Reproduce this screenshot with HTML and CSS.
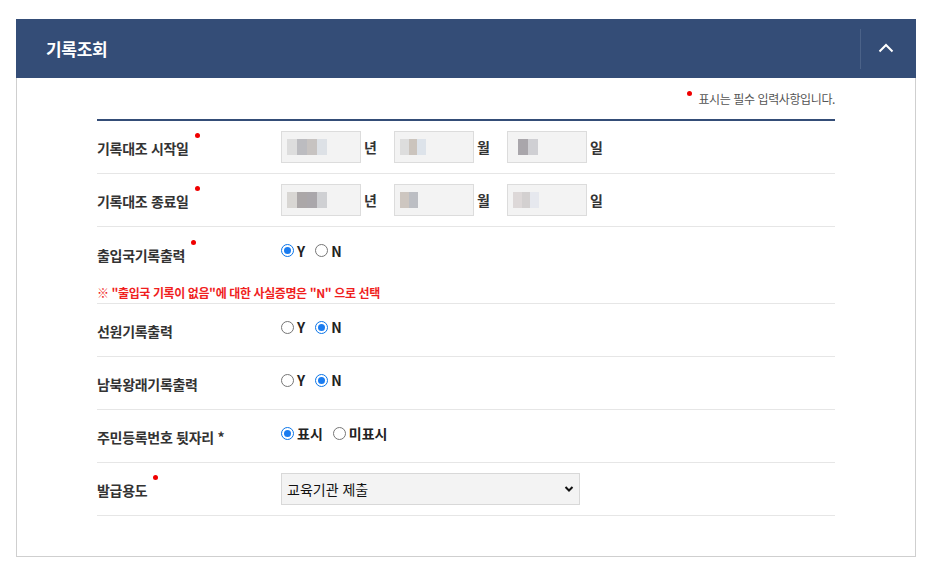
FILE: index.html
```html
<!DOCTYPE html>
<html lang="ko">
<head>
<meta charset="utf-8">
<title>기록조회</title>
<link rel="stylesheet" href="styles.css">
</head>
<body>
<section class="panel">
  <header class="panel-head">
    <h2 class="panel-title">기록조회</h2>
    <button class="toggle" type="button" aria-label="접기">
      <svg width="16" height="10" viewBox="0 0 16 10"><path d="M1.5 8.5 L8 2 L14.5 8.5" fill="none" stroke="#fff" stroke-width="2"/></svg>
    </button>
  </header>
  <div class="panel-body">
    <p class="req-note"><span class="dot"></span>표시는 필수 입력사항입니다.</p>
    <div class="form">
      <div class="row">
        <div class="label">기록대조 시작일<span class="dot"></span></div>
        <div class="field">
          <span class="inp"><span class="mosaic m1"></span></span><span class="unit">년</span>
          <span class="inp"><span class="mosaic m2"></span></span><span class="unit">월</span>
          <span class="inp"><span class="mosaic m3"></span></span><span class="unit">일</span>
        </div>
      </div>
      <div class="row">
        <div class="label">기록대조 종료일<span class="dot"></span></div>
        <div class="field">
          <span class="inp"><span class="mosaic m4"></span></span><span class="unit">년</span>
          <span class="inp"><span class="mosaic m5"></span></span><span class="unit">월</span>
          <span class="inp"><span class="mosaic m6"></span></span><span class="unit">일</span>
        </div>
      </div>
      <div class="row row-tall">
        <div class="row-main">
          <div class="label">출입국기록출력<span class="dot"></span></div>
          <div class="field radios">
            <label class="radio"><span class="rb on"></span>Y</label>
            <label class="radio"><span class="rb"></span>N</label>
          </div>
        </div>
        <p class="warn">※ "출입국 기록이 없음"에 대한 사실증명은 "N" 으로 선택</p>
      </div>
      <div class="row">
        <div class="label">선원기록출력</div>
        <div class="field radios">
          <label class="radio"><span class="rb"></span>Y</label>
          <label class="radio"><span class="rb on"></span>N</label>
        </div>
      </div>
      <div class="row">
        <div class="label">남북왕래기록출력</div>
        <div class="field radios">
          <label class="radio"><span class="rb"></span>Y</label>
          <label class="radio"><span class="rb on"></span>N</label>
        </div>
      </div>
      <div class="row">
        <div class="label">주민등록번호 뒷자리 *</div>
        <div class="field radios">
          <label class="radio"><span class="rb on"></span>표시</label>
          <label class="radio"><span class="rb"></span>미표시</label>
        </div>
      </div>
      <div class="row">
        <div class="label">발급용도<span class="dot"></span></div>
        <div class="field">
          <div class="select">
            <span>교육기관 제출</span>
            <svg width="10" height="8" viewBox="0 0 10 8"><path d="M1.5 2 L5 5.5 L8.5 2" fill="none" stroke="#111" stroke-width="2"/></svg>
          </div>
        </div>
      </div>
    </div>
  </div>
</section>
</body>
</html>
```
FILE: styles.css
```css
* { box-sizing: border-box; }
body {
  margin: 0;
  padding: 19px 17px 0 16px;
  background: #fff;
  font-family: "Noto Sans CJK KR", "Noto Sans", sans-serif;
  color: #222;
}
.panel { width: 900px; }
.panel-head {
  height: 59px;
  background: #344d77;
  display: flex;
  align-items: center;
  justify-content: space-between;
  padding-left: 30px;
}
.panel-title {
  margin: 0;
  color: #fff;
  font-size: 17px;
  font-weight: 700;
  letter-spacing: -0.3px;
}
.toggle {
  width: 56px;
  height: 40px;
  border: 0;
  border-left: 1px solid #4b6288;
  background: transparent;
  display: flex;
  align-items: center;
  justify-content: center;
  padding: 0 6px 2px 0;
}
.panel-body {
  border: 1px solid #cfcfcf;
  border-top: 0;
  padding: 0 80px 40px 80px;
}
.req-note {
  margin: 0;
  height: 43px;
  display: flex;
  justify-content: flex-end;
  align-items: center;
  padding-top: 0;
  font-size: 12px;
  color: #555;
  letter-spacing: -0.4px;
  border-bottom: 2px solid #344d77;
}
.dot {
  display: inline-block;
  width: 5px;
  height: 5px;
  border-radius: 50%;
  background: #f00000;
  vertical-align: top;
}
.req-note .dot { margin: -10px 6px 0 0; align-self: center; }
.row {
  min-height: 53px;
  border-bottom: 1px solid #e6e6e6;
  display: flex;
  align-items: center;
}
.row-tall {
  flex-direction: column;
  align-items: stretch;
  height: 77px;
  padding-top: 0;
}
.row-main {
  display: flex;
  align-items: center;
  height: 53px;
}
.label {
  width: 184px;
  font-size: 14px;
  font-weight: 700;
  color: #333;
  letter-spacing: -0.3px;
  position: relative;
  padding-top: 2px;
}
.label .dot { margin: -5px 0 0 6px; }
.field { display: flex; align-items: center; }
.inp {
  width: 80px;
  height: 32px;
  background: #f3f3f3;
  border: 1px solid #dcdcdc;
  display: flex;
  align-items: center;
  padding-left: 5px;
}
.mosaic { display: block; height: 16px; }
.m1 { width: 40px; background: linear-gradient(90deg,#ddd 0 25%,#bcbcc0 25% 50%,#c7c3c1 50% 75%,#dde1e6 75%); }
.m2 { width: 26px; background: linear-gradient(90deg,#ddd 0 33%,#cbc4bd 33% 66%,#dde3ea 66%); }
.m3 { width: 20px; margin-left: 5px; background: linear-gradient(90deg,#a9a6ab 0 50%,#cfcfd3 50%); }
.m4 { width: 40px; background: linear-gradient(90deg,#d8d6d3 0 25%,#aba7a8 25% 50%,#aaa7ab 50% 75%,#cfd0d3 75%); }
.m5 { width: 18px; background: linear-gradient(90deg,#cdc6c0 0 50%,#bcbec3 50%); }
.m6 { width: 26px; background: linear-gradient(90deg,#ddd8d8 0 33%,#d3d0d0 33% 66%,#e6e8ee 66%); }
.unit {
  width: 33px;
  padding-left: 3px;
  font-size: 14px;
  font-weight: 700;
  color: #333;
}
.radios { gap: 10px; margin-top: -6px; }
.radio {
  display: flex;
  align-items: center;
  gap: 3px;
  font-size: 14px;
  font-weight: 700;
  color: #222;
}
.rb {
  width: 13px;
  height: 13px;
  border-radius: 50%;
  border: 1px solid #767676;
  background: #fff;
  display: inline-block;
  position: relative;
}
.rb.on { border: 1px solid #0b75e8; }
.rb.on::after {
  content: "";
  position: absolute;
  left: 2px; top: 2px;
  width: 7px; height: 7px;
  border-radius: 50%;
  background: #1a7cf0;
}
.warn {
  margin: 0;
  padding-top: 4px;
  font-size: 12px;
  font-weight: 700;
  color: #f01e1e;
  letter-spacing: -0.4px;
}
.select {
  width: 299px;
  height: 32px;
  background: #f3f3f3;
  border: 1px solid #d8d8d8;
  display: flex;
  align-items: center;
  justify-content: space-between;
  padding: 0 5px 0 5px;
  font-size: 14px;
  color: #111;
}
```
